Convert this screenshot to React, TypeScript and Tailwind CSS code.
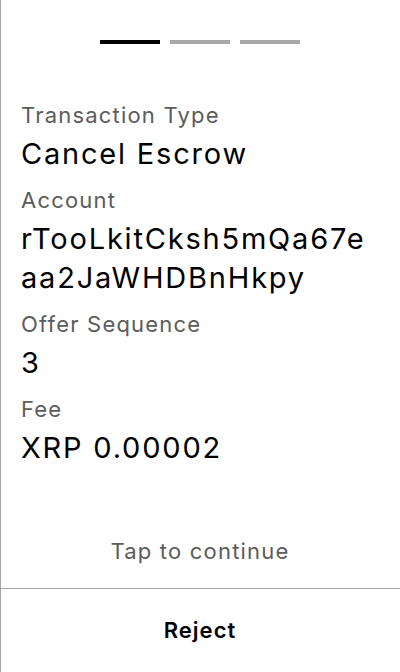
import React from "react";

type Field = {
  label: string;
  value: string;
};

const fields: Field[] = [
  { label: "Transaction Type", value: "Cancel Escrow" },
  { label: "Account", value: "rTooLkitCksh5mQa67eaa2JaWHDBnHkpy" },
  { label: "Offer Sequence", value: "3" },
  { label: "Fee", value: "XRP 0.00002" },
];

const App: React.FC = () => {
  const step = 0;

  return (
    <div
      className="h-screen w-full flex flex-col bg-white shadow-[inset_1px_0_0_#a6a6a6]"
      style={{ fontFamily: "Inter, 'Noto Sans', sans-serif" }}
    >
      {/* steps */}
      <div className="flex justify-center gap-[10px] pt-[40px]">
        {[0, 1, 2].map((i) => (
          <div
            key={i}
            className={`h-[4px] w-[60px] ${i === step ? "bg-black" : "bg-[#a8a8a8]"}`}
          />
        ))}
      </div>

      <div className="flex-1 flex flex-col px-[21px] pt-[57px]">
        {fields.map((f, index) => (
          <div key={index} className={index > 0 ? "mt-[13px]" : ""}>
            <p className="text-[22px] leading-[28px] tracking-[1.2px] text-[#5c5c5c]">{f.label}</p>
            <p className="mt-[5px] text-[29px] leading-[39px] tracking-[1.8px] text-black break-all">
              {f.value}
            </p>
          </div>
        ))}

        <p className="mt-auto mb-[23px] text-center text-[22px] leading-[28px] tracking-[1.2px] text-[#5c5c5c]">
          Tap to continue
        </p>
      </div>

      <div className="h-[84px] border-t border-[#a6a6a6] flex items-center justify-center">
        <button className="text-[22px] font-semibold tracking-[1px] text-black">Reject</button>
      </div>
    </div>
  );
};

export default App;
